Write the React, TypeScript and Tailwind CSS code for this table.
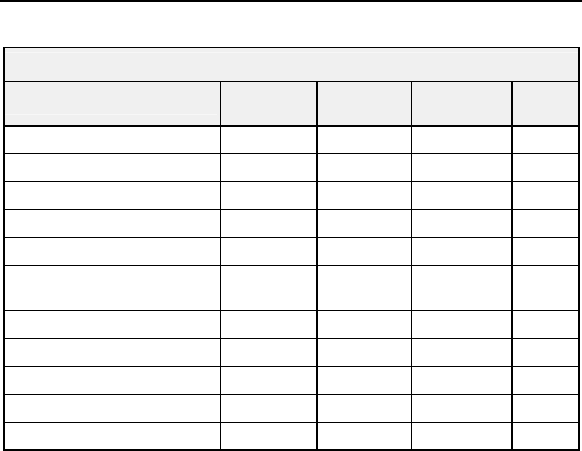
import React from "react";

const rowHeights = [27, 28, 28, 28, 28, 45, 28, 28, 28, 28, 26];

function Row({ h, last }: { h: number; last?: boolean }) {
  return (
    <div
      className={`flex ${last ? "" : "border-b border-black"}`}
      style={{ height: h }}
    >
      <div className="w-[216px] h-full border-r border-black" />
      <div className="w-[97px] h-full border-r-2 border-black" />
      <div className="w-[94px] h-full border-r border-black" />
      <div className="w-[101px] h-full border-r-2 border-black" />
      <div className="flex-1 h-full" />
    </div>
  );
}

export default function App() {
  return (
    <div className="w-[582px] h-[451px] bg-white overflow-hidden font-['Liberation_Sans',sans-serif]">
      <div className="h-[2px] bg-black" />
      <div className="mt-[45px] ml-[3px] w-[577px] border-t border-l-2 border-r-2 border-b-2 border-black">
        <div className="h-[34px] bg-[#f0f0f0] border-b border-black pt-[4px]">
          <div className="h-px bg-[#f7f7f7]" />
        </div>
        <div className="flex h-[45px] border-b-2 border-black bg-[#f0f0f0]">
          <div className="w-[216px] h-full border-r border-black flex flex-col justify-end pb-[10px] pr-[3px]">
            <div className="h-px bg-[#f7f7f7]" />
          </div>
          <div className="w-[97px] h-full border-r-2 border-black" />
          <div className="w-[94px] h-full border-r border-black" />
          <div className="w-[101px] h-full border-r-2 border-black" />
          <div className="flex-1 h-full" />
        </div>
        {rowHeights.map((h, i) => (
          <Row key={i} h={h} last={i === rowHeights.length - 1} />
        ))}
      </div>
    </div>
  );
}
